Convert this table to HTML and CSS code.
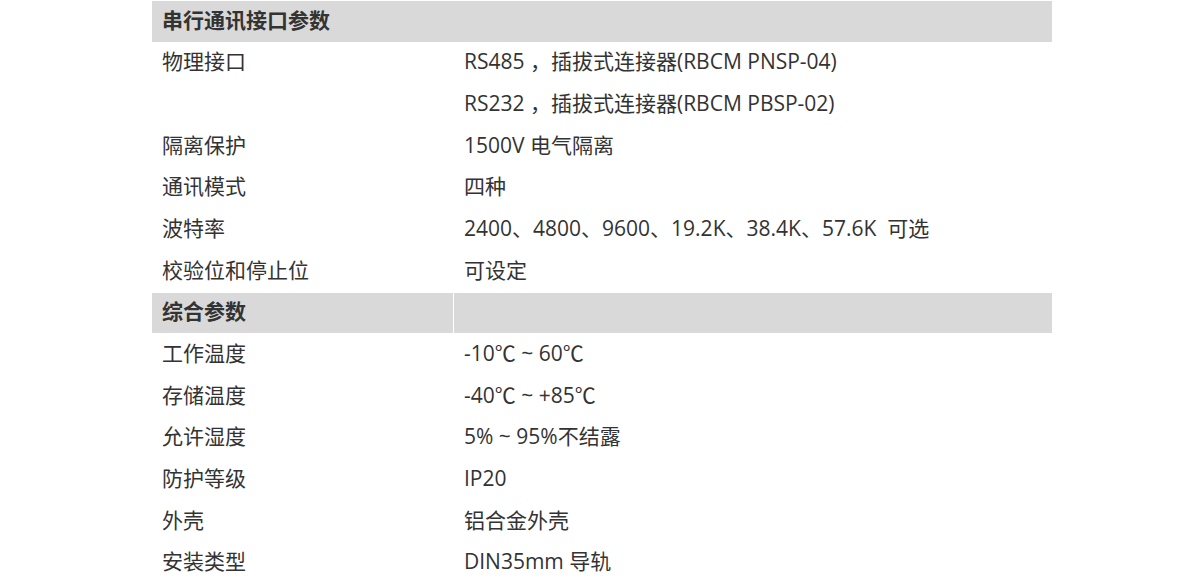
FILE: index.html
```html
<!DOCTYPE html>
<html lang="zh-CN">
<head>
<meta charset="utf-8">
<title>参数</title>
<link rel="stylesheet" href="styles.css">
</head>
<body>
<table class="spec">
  <colgroup><col class="c1"><col class="c2"></colgroup>
  <tbody>
    <tr class="head"><td colspan="2">串行通讯接口参数</td></tr>
    <tr><td>物理接口</td><td>RS485 ，插拔式连接器(RBCM PNSP-04)</td></tr>
    <tr><td></td><td>RS232 ，插拔式连接器(RBCM PBSP-02)</td></tr>
    <tr><td>隔离保护</td><td>1500V 电气隔离</td></tr>
    <tr><td>通讯模式</td><td>四种</td></tr>
    <tr><td>波特率</td><td>2400、4800、9600、19.2K、38.4K、57.6K &nbsp;可选</td></tr>
    <tr><td>校验位和停止位</td><td>可设定</td></tr>
    <tr class="head"><td>综合参数</td><td></td></tr>
    <tr><td>工作温度</td><td>-10℃ ~ 60℃</td></tr>
    <tr><td>存储温度</td><td>-40℃ ~ +85℃</td></tr>
    <tr><td>允许湿度</td><td>5% ~ 95%不结露</td></tr>
    <tr><td>防护等级</td><td>IP20</td></tr>
    <tr><td>外壳</td><td>铝合金外壳</td></tr>
    <tr><td>安装类型</td><td>DIN35mm 导轨</td></tr>
  </tbody>
</table>
</body>
</html>
```
FILE: styles.css
```css
html, body {
  margin: 0;
  padding: 0;
  background: #fff;
}
body {
  font-family: "Open Sans", "Noto Sans CJK SC", sans-serif;
  font-size: 21px;
  color: #333;
}
.spec {
  margin: 0 0 0 151px;
  width: 902px;
  border-collapse: separate;
  border-spacing: 1px;
  table-layout: fixed;
}
.spec .c1 { width: 301px; }
.spec td {
  box-sizing: border-box;
  height: 40.67px;
  padding: 0 10px 3px;
  vertical-align: middle;
  white-space: nowrap;
  line-height: 24px;
}
.spec .head td {
  background: #d9d9d9;
  font-weight: bold;
}
```
